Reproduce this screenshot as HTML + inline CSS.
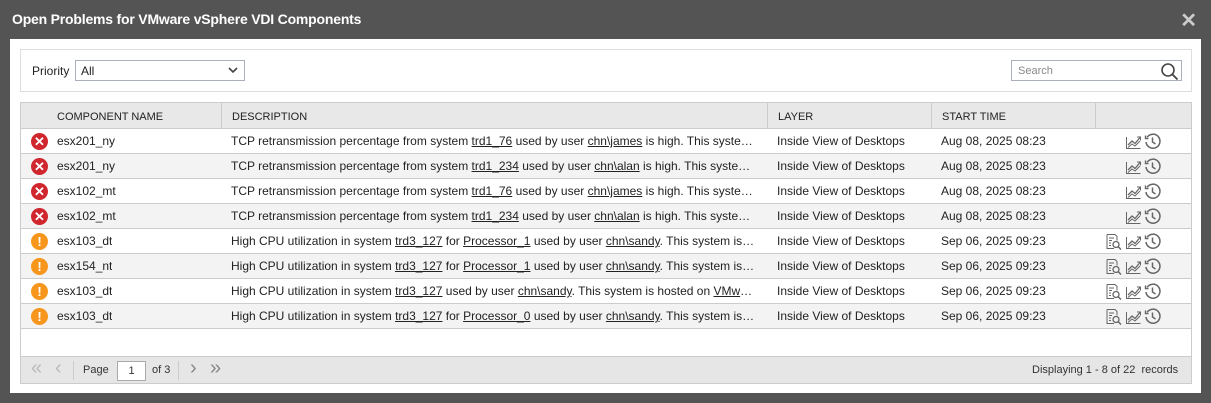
<!DOCTYPE html>
<html><head><meta charset="utf-8"><style>
*{box-sizing:border-box;margin:0;padding:0}
body{width:1211px;height:403px;background:#545454;font-family:"Liberation Sans",sans-serif;position:relative;overflow:hidden;color:#222;font-size:12px}
.title{position:absolute;left:12px;top:11px;color:#fff;font-weight:bold;font-size:14px;letter-spacing:-0.2px}
.close{position:absolute;right:14px;top:8px;color:#ccc;font-size:20px;font-weight:bold}
.panel{position:absolute;left:10px;top:39px;width:1191px;height:354px;background:#fff}
.filter{position:absolute;left:20px;top:49px;width:1172px;height:43px;border:1px solid #ddd}
.prio{position:absolute;left:11px;top:14px;font-size:12px}
.sel{position:absolute;left:54px;top:10px;width:170px;height:21px;border:1px solid #a9b0bb;padding:3px 5px;font-size:12px}
.sel svg{position:absolute;right:6px;top:6px}
.search{position:absolute;left:990px;top:10px;width:171px;height:21px;border:1px solid #a9b0bb;padding:4px 6px;color:#888;font-size:11px}
.search svg{position:absolute;right:2px;top:1px}
.grid{position:absolute;left:20px;top:102px;width:1172px;height:282px;border:1px solid #ccc}
.hdr{position:absolute;left:0;top:0;width:1170px;height:26px;background:#e8e8e8;border-bottom:1px solid #ccc;font-size:11px}
.hdr div{position:absolute;top:0;height:25px;line-height:28px;padding-left:10px;border-left:1px solid #ccc}
.row{position:absolute;left:0;width:1170px;height:25px;border-bottom:1px solid #ccc;white-space:nowrap}
.row.alt{background:#f3f3f3}
.row span.c{position:absolute;top:0;line-height:25px;overflow:hidden;text-overflow:ellipsis}
u{text-decoration:underline}
.ic{position:absolute;left:10px;top:4px;width:17px;height:17px;border-radius:50%;color:#fff;font-weight:bold;text-align:center;line-height:17px;font-size:13px}
.red{background:#d0262e}.org{background:#f7961d}
.acts{position:absolute;left:1075px;top:4px;width:80px;height:17px}
.acts svg{position:absolute;top:0}
.foot{position:absolute;left:0;top:253px;width:1170px;height:27px;background:#e6e6e6;border-top:1px solid #ccc;font-size:11px;color:#333}
.foot span{position:absolute;top:7px}
.foot span.ar{font-size:20px;top:0;font-weight:normal}
.pg{position:absolute;left:96px;top:4px;width:29px;height:20px;background:#fff;border:1px solid #aaa;text-align:center;line-height:18px;font-size:11px}
.sep{position:absolute;top:4px;width:1px;height:19px;background:#ccc}
</style></head><body>
<div class="title">Open Problems for VMware vSphere VDI Components</div>
<div class="close">✕</div>
<div class="panel"></div>
<div class="filter">
<div class="prio">Priority</div>
<div class="sel">All<svg width="10" height="7" viewBox="0 0 10 7"><path d="M1 1l4 4 4-4" stroke="#444" stroke-width="1.6" fill="none"/></svg></div>
<div class="search">Search<svg width="19" height="18" viewBox="0 0 19 18"><circle cx="8" cy="8" r="6" stroke="#444" stroke-width="1.6" fill="none"/><path d="M12.5 12.5l5 5" stroke="#444" stroke-width="1.8"/></svg></div>
</div>
<div class="grid">
<div class="hdr">
<div style="left:26px;border:none">COMPONENT NAME</div>
<div style="left:200px">DESCRIPTION</div>
<div style="left:746px">LAYER</div>
<div style="left:910px">START TIME</div>
<div style="left:1074px;width:96px"></div>
</div>
<div id="rows"></div>
<div class="foot">
<span class="ar" style="left:10px;color:#bbb">«</span>
<span class="ar" style="left:34px;color:#bbb">‹</span>
<div class="sep" style="left:52px"></div>
<span style="left:62px">Page</span>
<div class="pg">1</div>
<span style="left:131px">of 3</span>
<div class="sep" style="left:157px"></div>
<span class="ar" style="left:169px;color:#888">›</span>
<span class="ar" style="left:189px;color:#888">»</span>
<span style="left:1011px">Displaying 1 - 8 of 22&nbsp; records</span>
</div>
</div>
<script>
var R=[
['r','esx201_ny','TCP retransmission percentage from system <u>trd1_76</u> used by user <u>chn\\james</u> is high. This system is hosted','Aug 08, 2025 08:23',0],
['r','esx201_ny','TCP retransmission percentage from system <u>trd1_234</u> used by user <u>chn\\alan</u> is high. This system is hosted','Aug 08, 2025 08:23',0],
['r','esx102_mt','TCP retransmission percentage from system <u>trd1_76</u> used by user <u>chn\\james</u> is high. This system is hosted','Aug 08, 2025 08:23',0],
['r','esx102_mt','TCP retransmission percentage from system <u>trd1_234</u> used by user <u>chn\\alan</u> is high. This system is hosted','Aug 08, 2025 08:23',0],
['o','esx103_dt','High CPU utilization in system <u>trd3_127</u> for <u>Processor_1</u> used by user <u>chn\\sandy</u>. This system is hosted','Sep 06, 2025 09:23',1],
['o','esx154_nt','High CPU utilization in system <u>trd3_127</u> for <u>Processor_1</u> used by user <u>chn\\sandy</u>. This system is hosted','Sep 06, 2025 09:23',1],
['o','esx103_dt','High CPU utilization in system <u>trd3_127</u> used by user <u>chn\\sandy</u>. This system is hosted on <u>VMware vSphere</u>','Sep 06, 2025 09:23',1],
['o','esx103_dt','High CPU utilization in system <u>trd3_127</u> for <u>Processor_0</u> used by user <u>chn\\sandy</u>. This system is hosted','Sep 06, 2025 09:23',1]];
var trend='<svg width="17" height="17" viewBox="0 0 17 17" style="left:29px"><path d="M1.5 4v11.5h14" stroke="#666" fill="none"/><path d="M3 12l4-4 3 2.5 5-6" stroke="#666" stroke-width="1.3" fill="none"/><path d="M12 4h3.5v3.5" stroke="#666" fill="none"/><path d="M3 14.5l4-3.5 3 2 5-5" stroke="#666" fill="none"/></svg>';
var hist='<svg width="17" height="17" viewBox="0 0 17 17" style="left:48px"><path d="M3.2 4.2A7 7 0 1 1 2 9" stroke="#666" stroke-width="1.5" fill="none"/><path d="M1.5 2.5v3h3" stroke="#666" stroke-width="1.4" fill="none"/><path d="M8.5 4.5v4.5l3 2" stroke="#666" stroke-width="1.5" fill="none"/></svg>';
var doc='<svg width="17" height="17" viewBox="0 0 17 17" style="left:9px"><path d="M2 1.5h8l2 2v4M2 1.5v14h7" stroke="#666" fill="none"/><path d="M4 5h5M4 7.5h3M4 10h2M4 12.5h2" stroke="#666"/><circle cx="11" cy="11.5" r="3" stroke="#666" stroke-width="1.3" fill="none"/><path d="M13 13.5l3 3" stroke="#666" stroke-width="1.5"/></svg>';
var h='';
R.forEach(function(r,i){
h+='<div class="row'+(i%2?' alt':'')+'" style="top:'+(26+i*25)+'px">'+
'<div class="ic '+(r[0]=='r'?'red':'org')+'">'+(r[0]=='r'?'✕':'!')+'</div>'+
'<span class="c" style="left:36px">'+r[1]+'</span>'+
'<span class="c" style="left:210px;width:526px">'+r[2]+'</span>'+
'<span class="c" style="left:756px">Inside View of Desktops</span>'+
'<span class="c" style="left:920px">'+r[3]+'</span>'+
'<div class="acts">'+(r[4]?doc:'')+trend+hist+'</div></div>';
});
document.getElementById('rows').innerHTML=h;
</script>
</body></html>
